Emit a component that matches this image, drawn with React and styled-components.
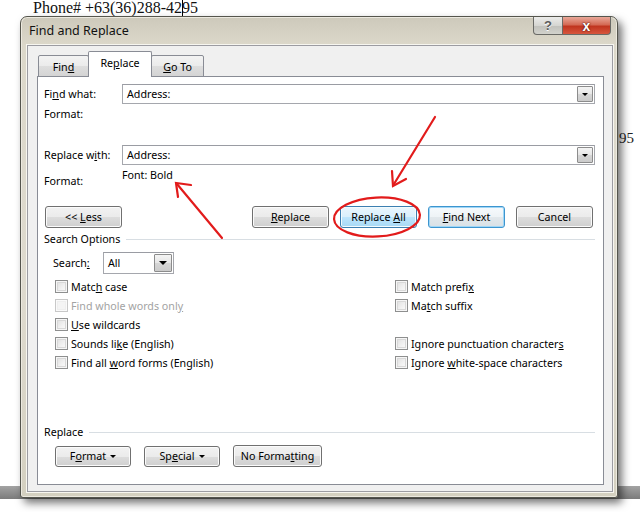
import styled, { createGlobalStyle, css } from "styled-components";

const GlobalStyle = createGlobalStyle`
  html, body { margin: 0; padding: 0; background: #fff; }
  body { width: 640px; height: 512px; overflow: hidden; }
  * { box-sizing: border-box; }
`;

const ui = `"Noto Sans", "Liberation Sans", Arial, sans-serif`;

const Page = styled.div`
  position: relative;
  width: 640px;
  height: 512px;
  overflow: hidden;
  background: #fff;
  font-family: ${ui};
`;

const DocText = styled.div`
  font-family: "Liberation Serif", "Times New Roman", serif;
  font-size: 16px;
  line-height: 14px;
  height: 16px;
  padding-left: 33px;
  color: #111;
`;

const Caret = styled.span`
  display: inline-block;
  width: 0;
  height: 17px;
  border-left: 1px solid #000;
  vertical-align: -4px;
  margin: 0 -1px 0 0;
`;

const DocFragment = styled.div`
  position: absolute;
  left: 619px;
  top: 130px;
  font-family: "Liberation Serif", serif;
  font-size: 15px;
  color: #222;
`;

const DocBar = styled.div`
  position: absolute;
  left: 0;
  right: 0;
  top: 486px;
  height: 13px;
  background: linear-gradient(#a3a3a3, #7b7b7b);
`;

const Window = styled.div`
  position: relative;
  z-index: 1;
  margin-left: 20px;
  width: 598px;
  height: 482px;
  border: 1px solid #55554d;
  border-radius: 7px 7px 3px 3px;
  background: linear-gradient(#cdc9bb, #dcd8ca 28px, #dedace 60%, #d4d0c0);
  box-shadow: 4px 5px 9px rgba(0, 0, 0, 0.55), inset 0 0 0 1px #ece9df;
  padding: 0 4px 5px 6px;
  display: flex;
  flex-direction: column;
`;

const TitleBar = styled.div`
  height: 28px;
  display: flex;
  justify-content: space-between;
  align-items: flex-start;
`;

const Title = styled.div`
  padding-left: 2px;
  line-height: 28px;
  font-size: 12.5px;
  color: #111;
`;

const Captions = styled.div`
  display: flex;
  margin-right: 2px;
`;

const CaptionButton = styled.div`
  height: 18px;
  display: flex;
  align-items: center;
  justify-content: center;
  border: 1px solid #6a6a66;
  border-top: none;
  font-weight: bold;
  font-family: "Liberation Sans", Arial, sans-serif;
  ${(p) =>
    p.$close
      ? css`
          width: 48px;
          border-left: none;
          border-radius: 0 0 4px 0;
          background: linear-gradient(#e9a899, #d46a55 45%, #c0351f 55%, #d7563e);
          color: #fff;
          font-size: 14px;
          text-shadow: 0 0 2px #5a1208, 0 0 1px #5a1208;
        `
      : css`
          width: 30px;
          border-radius: 0 0 0 4px;
          background: linear-gradient(#ececea, #d6d6d2 50%, #c2c2bd 55%, #d2d2cc);
          color: #5b5b5b;
          font-size: 13px;
          text-shadow: 0 1px 0 #fff;
        `}
`;

const Client = styled.div`
  flex: 1;
  display: flex;
  flex-direction: column;
  background: #f0f0f0;
  border: 1px solid #9c9ca2;
  box-shadow: 0 0 0 1px #f7f6f0;
  padding: 5px 8px 6px 9px;
`;

const TabStrip = styled.div`
  display: flex;
  align-items: flex-end;
  height: 26px;
  padding-left: 1px;
  margin-bottom: -1px;
  position: relative;
  z-index: 1;
`;

const Tab = styled.div`
  width: ${(p) => p.$w}px;
  display: flex;
  align-items: center;
  justify-content: center;
  font-size: 10.7px;
  color: #000;
  border: 1px solid #898c95;
  border-radius: 2px 2px 0 0;
  ${(p) =>
    p.$active
      ? css`
          height: 26px;
          background: #fff;
          border-bottom: none;
          padding-bottom: 4px;
          margin: 0 -1px;
        `
      : css`
          height: 22px;
          background: linear-gradient(#f3f3f3, #ebebeb 50%, #dedede 50%, #d4d4d4);
          padding-top: 1px;
        `}
`;

const Panel = styled.div`
  flex: 1;
  background: #fff;
  border: 1px solid #898c95;
  padding: 0 8px 0 6px;
  display: flex;
  flex-direction: column;
  font-size: 10.7px;
  color: #000;
`;

const Row = styled.div`
  display: flex;
  align-items: center;
  height: ${(p) => p.$h || 20}px;
  margin-top: ${(p) => p.$mt || 0}px;
  padding-left: ${(p) => p.$indent || 0}px;
`;

const Label = styled.div`
  width: ${(p) => p.$w || 78}px;
  flex-shrink: 0;
  line-height: 14px;
  align-self: ${(p) => p.$align || "center"};
`;

const Combo = styled.div`
  flex: ${(p) => (p.$w ? "none" : 1)};
  width: ${(p) => (p.$w ? `${p.$w}px` : "auto")};
  height: 100%;
  display: flex;
  align-items: stretch;
  border: 1px solid #a5a7ad;
  border-top-color: #9a9ca3;
  padding: 1px;
  background: #fff;
`;

const ComboText = styled.div`
  flex: 1;
  display: flex;
  align-items: center;
  padding-left: 3px;
`;

const DropButton = styled.div`
  width: ${(p) => p.$w || 16}px;
  display: flex;
  align-items: center;
  justify-content: center;
  border: 1px solid #8c8c8c;
  border-radius: 1px;
  background: linear-gradient(#f4f4f4, #e6e6e6 50%, #d6d6d6 50%, #cbcbcb);
`;

const Arrow = styled.span`
  display: inline-block;
  width: 0;
  height: 0;
  border-left: ${(p) => p.$s || 4}px solid transparent;
  border-right: ${(p) => p.$s || 4}px solid transparent;
  border-top: ${(p) => p.$s || 4}px solid #000;
  margin-left: ${(p) => p.$ml || 0}px;
  vertical-align: 2px;
`;

const FontNote = styled.div`
  line-height: 14px;
  align-self: flex-start;
`;

const ButtonRow = styled.div`
  display: flex;
  align-items: center;
  gap: ${(p) => p.$gap || 11}px;
  height: 22px;
  margin-top: ${(p) => p.$mt || 0}px;
  padding-left: ${(p) => p.$indent || 1}px;
  padding-right: 2px;
`;

const Spacer = styled.div`
  flex: 1;
`;

const Button = styled.div`
  width: ${(p) => p.$w || 77}px;
  height: ${(p) => p.$h || 22}px;
  display: flex;
  align-items: center;
  justify-content: center;
  border: 1px solid #707070;
  border-radius: 3px;
  font-size: 10.7px;
  color: #000;
  white-space: pre;
  background: linear-gradient(#f2f2f2, #ebebeb 50%, #dddddd 50%, #cfcfcf);
  box-shadow: inset 0 0 0 1px #fbfbfb;
  ${(p) =>
    p.$hover &&
    css`
      border-color: #3c7fb1;
      background: linear-gradient(#eaf6fd, #d9f0fc 50%, #bee6fd 50%, #a7d9f5);
      box-shadow: inset 0 0 0 1px #f3fbfe;
    `}
  ${(p) =>
    p.$default &&
    css`
      border-color: #3d95cf;
      background: linear-gradient(#f6fafd, #eef3f6 50%, #e2e8ec 50%, #d9e1e6);
      box-shadow: inset 0 0 0 1px #9fd6f6;
    `}
`;

const Section = styled.div`
  display: flex;
  align-items: center;
  height: 14px;
  margin-top: ${(p) => p.$mt || 0}px;
  line-height: 14px;
  &::after {
    content: "";
    flex: 1;
    height: 1px;
    margin: 0 0 0 6px;
    background: #d8dee3;
  }
`;

const OptionGrid = styled.div`
  display: grid;
  grid-template-columns: 340px 1fr;
  grid-auto-rows: 19px;
  margin-top: 3px;
  padding-left: 11px;
`;

const Option = styled.div`
  display: flex;
  align-items: center;
  color: ${(p) => (p.$disabled ? "#a3a3a3" : "#000")};
`;

const Box = styled.span`
  width: 13px;
  height: 13px;
  flex-shrink: 0;
  margin-right: 3px;
  border: 1px solid ${(p) => (p.$disabled ? "#c8c8c8" : "#8e8f8f")};
  background: ${(p) =>
    p.$disabled
      ? "#f4f4f4"
      : "linear-gradient(135deg, #dcdcdc, #f2f2f2 60%, #fdfdfd)"};
  box-shadow: inset 0 0 0 1px ${(p) => (p.$disabled ? "#fafafa" : "#f6f6f6")},
    inset 0 0 0 2px ${(p) => (p.$disabled ? "#eee" : "#d8d8d8")};
`;

const U = styled.span`
  text-decoration: underline;
  text-underline-offset: 1px;
`;

const Annotations = styled.svg`
  position: absolute;
  left: 0;
  top: 0;
  z-index: 2;
  pointer-events: none;
`;

const Check = ({ children, disabled }) => (
  <Option $disabled={disabled}>
    <Box $disabled={disabled} />
    <span>{children}</span>
  </Option>
);

const options = [
  [<>Matc<U>h</U> case</>, <>Match prefi<U>x</U></>],
  [<>Find whole words onl<U>y</U></>, <>Ma<U>t</U>ch suffix</>, true],
  [<><U>U</U>se wildcards</>, null],
  [<>Sounds li<U>k</U>e (English)</>, <>Ignore punctuation character<U>s</U></>],
  [<>Find all <U>w</U>ord forms (English)</>, <>Ignore <U>w</U>hite-space characters</>],
];

export default function App() {
  return (
    <Page>
      <GlobalStyle />
      <DocBar />
      <DocFragment>95</DocFragment>
      <DocText>
        Phone# +63(36)288-42<Caret />95
      </DocText>
      <Window>
        <TitleBar>
          <Title>Find and Replace</Title>
          <Captions>
            <CaptionButton>?</CaptionButton>
            <CaptionButton $close>x</CaptionButton>
          </Captions>
        </TitleBar>
        <Client>
          <TabStrip>
            <Tab $w={51}><span>Fin<U>d</U></span></Tab>
            <Tab $w={64} $active><span>Re<U>p</U>lace</span></Tab>
            <Tab $w={53}><span><U>G</U>o To</span></Tab>
          </TabStrip>
          <Panel>
            <Row $mt={7}>
              <Label>Fi<U>n</U>d what:</Label>
              <Combo>
                <ComboText>Address:</ComboText>
                <DropButton><Arrow $s={3} /></DropButton>
              </Combo>
            </Row>
            <Row $mt={2} $h={16}>
              <Label>Format:</Label>
            </Row>
            <Row $mt={23}>
              <Label>Replace w<U>i</U>th:</Label>
              <Combo>
                <ComboText>Address:</ComboText>
                <DropButton><Arrow $s={3} /></DropButton>
              </Combo>
            </Row>
            <Row $mt={3}>
              <Label $align="flex-end">Format:</Label>
              <FontNote>Font: Bold</FontNote>
            </Row>
            <ButtonRow $mt={18}>
              <Button><span>&lt;&lt; <U>L</U>ess</span></Button>
              <Spacer />
              <Button><span><U>R</U>eplace</span></Button>
              <Button $hover><span>Replace <U>A</U>ll</span></Button>
              <Button $default><span><U>F</U>ind Next</span></Button>
              <Button><span>Cancel</span></Button>
            </ButtonRow>
            <Section $mt={4}>Search Options</Section>
            <Row $mt={6} $h={22} $indent={9}>
              <Label $w={50}>Search<U>:</U></Label>
              <Combo $w={71}>
                <ComboText>All</ComboText>
                <DropButton $w={18}><Arrow $s={4} /></DropButton>
              </Combo>
            </Row>
            <OptionGrid>
              {options.map(([left, right, dis], i) => [
                <Check key={`l${i}`} disabled={dis}>{left}</Check>,
                right ? <Check key={`r${i}`}>{right}</Check> : <div key={`r${i}`} />,
              ])}
            </OptionGrid>
            <Section $mt={53}>Replace</Section>
            <ButtonRow $mt={6} $indent={11} $gap={13}>
              <Button $w={76} $h={21}><span>F<U>o</U>rmat<Arrow $s={3} $ml={4} /></span></Button>
              <Button $w={76} $h={21}><span>Sp<U>e</U>cial<Arrow $s={3} $ml={4} /></span></Button>
              <Button $w={89} $h={22}><span>No Forma<U>t</U>ting</span></Button>
            </ButtonRow>
          </Panel>
        </Client>
      </Window>
      <Annotations width="640" height="512" viewBox="0 0 640 512">
        <g stroke="#e21b1b" strokeWidth="2.2" fill="none" strokeLinecap="round">
          <line x1="435" y1="117" x2="394" y2="184" />
          <polyline points="392,171 393,186 406,179" />
          <ellipse cx="377" cy="217" rx="43" ry="19.5" transform="rotate(-3 377 217)" />
          <line x1="222" y1="238" x2="177" y2="184" />
          <polyline points="191,185 176,183 178,197" />
        </g>
      </Annotations>
    </Page>
  );
}
